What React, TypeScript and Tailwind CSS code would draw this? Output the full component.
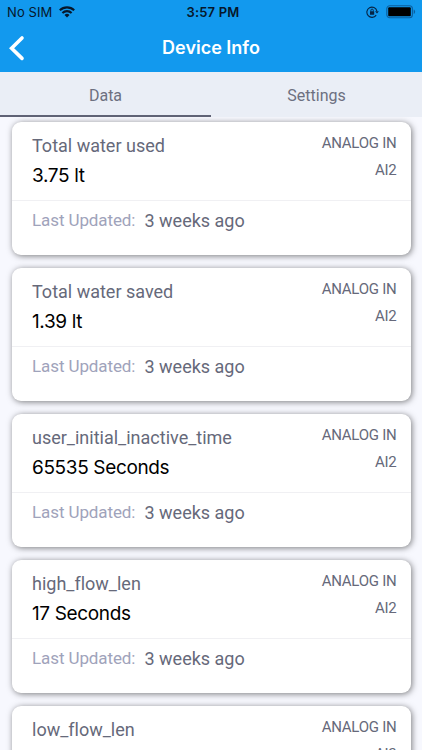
const readings = [
  { name: "Total water used", value: "3.75 lt" },
  { name: "Total water saved", value: "1.39 lt" },
  { name: "user_initial_inactive_time", value: "65535 Seconds" },
  { name: "high_flow_len", value: "17 Seconds" },
  { name: "low_flow_len", value: "" },
];

function WifiIcon() {
  return (
    <svg width="16" height="12" viewBox="0 0 16 12" fill="none" stroke="#06172b" strokeWidth="2.1" aria-hidden="true">
      <path d="M0.8 4.3a10.4 10.4 0 0 1 14.4 0" />
      <path d="M3.4 7a6.6 6.6 0 0 1 9.2 0" />
      <path d="M5.5 8.9a3.7 3.7 0 0 1 5 0L8 11.4z" fill="#06172b" stroke="none" />
    </svg>
  );
}

function RotationLockIcon() {
  return (
    <svg width="13" height="12" viewBox="0 0 13 12" fill="none" stroke="#062444" aria-hidden="true">
      <path d="M10.2 9.1A5.1 5.1 0 1 1 10.9 5" strokeWidth="1.1" />
      <path d="M9 5.2h3.9L11 7.4z" fill="#062444" stroke="none" />
      <rect x="4" y="5.2" width="4.2" height="3.5" rx="0.3" fill="#062444" stroke="none" />
      <path d="M4.9 5.4V4.3a1.2 1.2 0 0 1 2.4 0v1.1" strokeWidth="0.9" />
    </svg>
  );
}

function BatteryIcon() {
  return (
    <svg width="30" height="14" viewBox="0 0 30 14" aria-hidden="true">
      <rect x="0.8" y="0.8" width="25.6" height="12" rx="3" fill="none" stroke="#0b5f9f" strokeWidth="1.1" />
      <rect x="2.2" y="2.3" width="22.6" height="9" rx="1" fill="#000" />
      <path d="M27.7 4.6c1.9.7 1.9 3.8 0 4.5z" fill="#0b5f9f" />
    </svg>
  );
}

function StatusBar() {
  return (
    <div className="grid h-6 grid-cols-3 items-center font-['Inter',sans-serif] text-[13px] text-[#06172b]">
      <div className="flex items-center gap-[7px] pl-[7px]">
        <span className="pt-px tracking-[0.1px]">No SIM</span>
        <WifiIcon />
      </div>
      <div className="pt-px pl-1 text-center font-semibold tracking-[0.2px]">3:57 PM</div>
      <div className="flex items-center justify-end gap-[7px] pr-[6px]">
        <RotationLockIcon />
        <BatteryIcon />
      </div>
    </div>
  );
}

function ReadingCard({ name, value }: { name: string; value: string }) {
  return (
    <article className="h-[133px] shrink-0 rounded-[9px] bg-white shadow-[1px_1px_6px_rgba(0,0,0,0.5)]">
      <div className="flex h-[79px] justify-between border-b border-[#f0f0f3] pt-2 pr-[14px] pl-[20.5px]">
        <div className="pt-px">
          <h2 className="text-[18px] leading-[30px] text-[#66697a] [font-variant-ligatures:none]">{name}</h2>
          <p className="font-['Inter',sans-serif] text-[19px] leading-[29px] tracking-[-0.36px] text-black">{value}</p>
        </div>
        <div className="text-right text-[15px] tracking-[-0.25px] text-[#66697a]">
          <p className="leading-[26px]">ANALOG IN</p>
          <p className="leading-[28px]">AI2</p>
        </div>
      </div>
      <div className="flex h-[38px] items-center pl-[20.5px]">
        <span className="w-[112.5px] pt-px text-[17px] tracking-[-0.1px] text-[#9fa3bb]">Last Updated:</span>
        <span className="text-[18px] text-[#66697a]">3 weeks ago</span>
      </div>
    </article>
  );
}

export default function App() {
  return (
    <div className="flex h-[750px] w-[422px] flex-col overflow-hidden bg-[#f7f8fe] font-['Roboto',sans-serif]">
      <header className="h-[72px] shrink-0 bg-[#1299ee]">
        <StatusBar />
        <div className="grid h-[47px] grid-cols-[40px_1fr_40px] items-center">
          <button aria-label="Back" className="pl-[8px]">
            <svg width="17" height="26" viewBox="0 0 17 26" fill="none" stroke="#fff" strokeWidth="3.6" aria-hidden="true">
              <path d="M14 3L3.6 13.2L14 23.4" strokeLinecap="round" />
            </svg>
          </button>
          <h1 className="text-center font-['Inter',sans-serif] text-[18px] font-semibold text-white">Device Info</h1>
        </div>
      </header>

      <nav className="grid h-[45px] shrink-0 grid-cols-2 bg-[#eaeef6] text-[16px] text-[#6d7080]">
        <button className="border-b-2 border-[#5f6275] pt-1">Data</button>
        <button className="border-b-2 border-transparent pt-1">Settings</button>
      </nav>

      <main className="flex flex-1 flex-col gap-[13px] overflow-hidden pt-[5px] pr-[11.5px] pl-[11.5px]">
        {readings.map((reading) => (
          <ReadingCard key={reading.name} name={reading.name} value={reading.value} />
        ))}
      </main>
    </div>
  );
}
